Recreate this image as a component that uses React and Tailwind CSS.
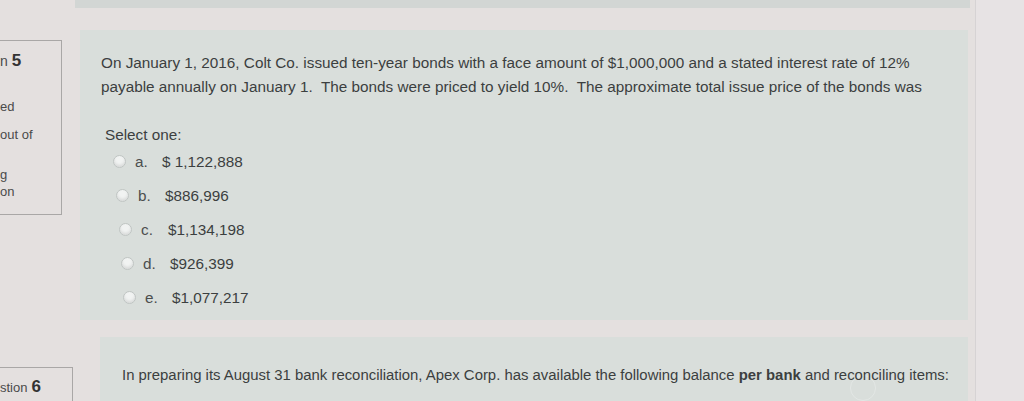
import React from 'react';

const OPTIONS = [
  { letter: 'a.', value: '$ 1,122,888', shift: 'pl-0' },
  { letter: 'b.', value: '$886,996', shift: 'pl-[3px]' },
  { letter: 'c.', value: '$1,134,198', shift: 'pl-[6px]' },
  { letter: 'd.', value: '$926,399', shift: 'pl-[8px]' },
  { letter: 'e.', value: '$1,077,217', shift: 'pl-[10px]' },
];

function Radio() {
  return (
    <span className="inline-block h-[13px] w-[13px] shrink-0 rounded-full border border-[#bfc4c2] bg-[#f1f3f2] shadow-[inset_0_-2px_3px_rgba(0,0,0,0.10)]" />
  );
}

export default function App() {
  return (
    <div className="flex h-[401px] w-[1024px] overflow-hidden bg-[#e4e0df] font-['Liberation_Sans',Arial,sans-serif] text-[#3c3f3f]">
      <div className="flex w-[975px] shrink-0 flex-col">
        {/* tail of the previous question */}
        <div className="ml-[75px] h-[8px] w-[895px] shrink-0 bg-[#d2d6d4]" />

        {/* question 5 */}
        <div className="mt-[22px] flex shrink-0">
          <div className="mt-[10px] flex h-[175px] w-[62px] flex-col border border-l-0 border-[#a9a7a6] text-[13px] text-[#4a4a4a]">
            <div className="mt-[11px] flex items-baseline gap-[4px] leading-none">
              <span className="text-[14px]">n</span>
              <span className="text-[17px] font-bold text-[#333]">5</span>
            </div>
            <div className="mt-[31px] leading-none">ed</div>
            <div className="mt-[15px] leading-none">out of</div>
            <div className="mt-[27px] leading-none">g</div>
            <div className="mt-[4px] leading-none">on</div>
          </div>

          <div className="ml-[18px] h-[290px] w-[888px] bg-[#d9dedb] pl-[21px] pt-[21px]">
            <p className="text-[15.3px] leading-[24px]">
              On January 1, 2016, Colt Co. issued ten-year bonds with a face amount of $1,000,000 and a stated interest rate of 12%
              <br />
              payable annually on January 1.&nbsp; The bonds were priced to yield 10%.&nbsp; The approximate total issue price of the bonds was
            </p>

            <div className="mt-[28px] pl-[4px] text-[15.3px] leading-none">Select one:</div>

            <div className="mt-[12px] flex flex-col gap-[19px] pl-[12px]">
              {OPTIONS.map((o) => (
                <div key={o.letter} className={`flex items-center text-[15.3px] leading-[15px] ${o.shift}`}>
                  <Radio />
                  <span className="ml-[9px] w-[27px] text-[#4c4e4e]">{o.letter}</span>
                  <span>{o.value}</span>
                </div>
              ))}
            </div>
          </div>
        </div>

        {/* question 6 */}
        <div className="mt-[17px] flex shrink-0">
          <div className="mt-[30px] flex h-[60px] w-[73px] border border-b-0 border-l-0 border-[#a9a7a6] pt-[10px] text-[13px] text-[#4a4a4a]">
            <div className="flex items-baseline gap-[4px] leading-none">
              <span>stion</span>
              <span className="text-[17px] font-bold text-[#333]">6</span>
            </div>
          </div>

          <div className="relative ml-[27px] h-[70px] w-[868px] bg-[#d9dedb] pl-[22px] pt-[29px]">
            <span className="absolute left-[750px] top-[38px] h-[26px] w-[26px] rounded-full border border-[#e3e7e5]" />
            <p className="relative text-[14.9px] leading-[18px]">
              In preparing its August 31 bank reconciliation, Apex Corp. has available the following balance <b>per bank</b> and reconciling items:
            </p>
          </div>
        </div>
      </div>

      <div className="flex-1 border-l border-[#d6d3d4] bg-[#e7e3e4]" />
    </div>
  );
}
